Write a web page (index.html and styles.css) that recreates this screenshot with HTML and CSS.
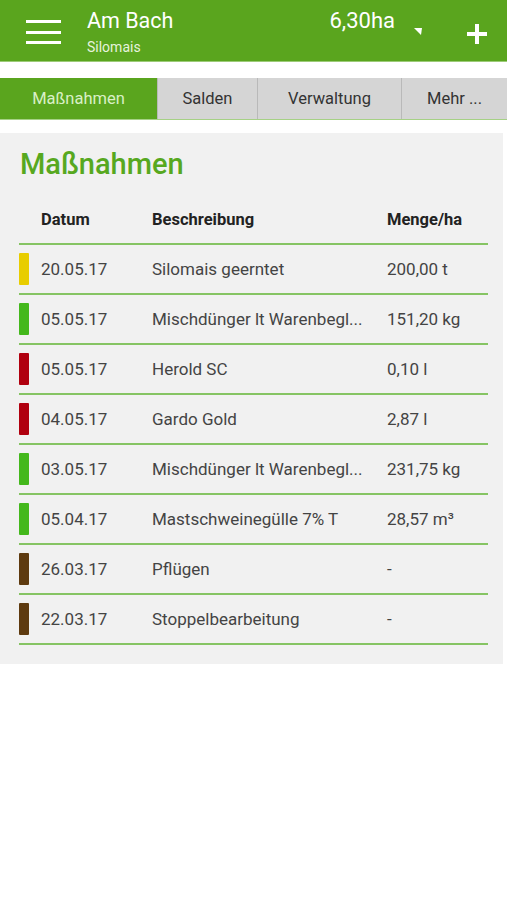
FILE: index.html
```html
<!DOCTYPE html>
<html lang="de">
<head>
<meta charset="utf-8">
<link rel="stylesheet" href="styles.css">
</head>
<body>
<header class="appbar">
  <svg class="menu" width="35" height="24" viewBox="0 0 35 24"><rect x="0" y="0" width="35" height="3" fill="#fff"/><rect x="0" y="11" width="35" height="3" fill="#fff"/><rect x="0" y="21" width="35" height="3" fill="#fff"/></svg>
  <div class="titles">
    <div class="title">Am Bach</div>
    <div class="subtitle">Silomais</div>
  </div>
  <div class="area">6,30ha</div>
  <svg class="caret" width="8" height="7" viewBox="0 0 8 7"><polygon points="0,0 8,0 7,7" fill="#fff"/></svg>
  <svg class="plus" width="20" height="20" viewBox="0 0 20 20"><rect x="8" y="0" width="4" height="20" fill="#fff"/><rect x="0" y="8" width="20" height="4" fill="#fff"/></svg>
</header>

<nav class="tabs">
  <div class="tab active t1">Maßnahmen</div>
  <div class="tab t2">Salden</div>
  <div class="tab t3">Verwaltung</div>
  <div class="tab t4">Mehr ...</div>
</nav>

<section class="card">
  <h1 class="card-title">Maßnahmen</h1>
  <div class="row head">
    <span></span><span>Datum</span><span>Beschreibung</span><span>Menge/ha</span>
  </div>
  <div class="row"><span class="bar yellow"></span><span>20.05.17</span><span>Silomais geerntet</span><span>200,00 t</span></div>
  <div class="row"><span class="bar green"></span><span>05.05.17</span><span>Mischdünger lt Warenbegl...</span><span>151,20 kg</span></div>
  <div class="row"><span class="bar red"></span><span>05.05.17</span><span>Herold SC</span><span>0,10 l</span></div>
  <div class="row"><span class="bar red"></span><span>04.05.17</span><span>Gardo Gold</span><span>2,87 l</span></div>
  <div class="row"><span class="bar green"></span><span>03.05.17</span><span>Mischdünger lt Warenbegl...</span><span>231,75 kg</span></div>
  <div class="row"><span class="bar green"></span><span>05.04.17</span><span>Mastschweinegülle 7% T</span><span>28,57 m³</span></div>
  <div class="row"><span class="bar brown"></span><span>26.03.17</span><span>Pflügen</span><span>-</span></div>
  <div class="row"><span class="bar brown"></span><span>22.03.17</span><span>Stoppelbearbeitung</span><span>-</span></div>
</section>
</body>
</html>
```
FILE: styles.css
```css
* { box-sizing: border-box; }
body {
  margin: 0;
  background: #fff;
  font-family: Roboto, "Liberation Sans", sans-serif;
  color: #444;
}
.appbar {
  display: flex;
  align-items: flex-start;
  height: 62px;
  background: #5aa51e;
  border-bottom: 1px solid #9ccb78;
  padding: 0 20px 0 26px;
  color: #fff;
}
.menu { margin-top: 20px; flex: none; }
.titles { flex: 1; margin-left: 26px; padding-top: 8px; }
.title { font-size: 21.5px; line-height: 25px; }
.subtitle { font-size: 14px; line-height: 18px; margin-top: 5px; color: #e6f3dc; }
.area { font-size: 22px; line-height: 25px; margin-top: 8px; }
.caret { margin: 28px 0 0 19px; }
.plus { margin: 24px 0 0 45px; }

.tabs {
  display: flex;
  margin-top: 16px;
  height: 42px;
  border-bottom: 1px solid #a6d186;
}
.tab {
  display: flex;
  align-items: center;
  justify-content: center;
  background: #d5d5d5;
  border-left: 1px solid #b9b9b9;
  font-size: 16.5px;
  color: #333;
}
.tab.active { background: #5aa51e; color: #d9f0c6; border-left: none; }
.t1 { width: 157px; }
.t2 { width: 100px; }
.t3 { width: 144px; }
.t4 { flex: 1; }

.card {
  margin: 13px 4px 0 0;
  background: #f1f1f1;
  padding: 15px 15px 19px 19px;
}
.card-title {
  margin: 0 0 14px 1px;
  font-size: 29px;
  line-height: 33px;
  font-weight: 500;
  color: #57a81f;
}
.row {
  display: grid;
  grid-template-columns: 22px 111px 235px 1fr;
  align-items: center;
  height: 50px;
  border-bottom: 2px solid #86c463;
  font-size: 17px;
  white-space: nowrap;
}
.row.head {
  font-size: 16.5px;
  font-weight: 700;
  color: #222;
}
.bar { width: 10px; height: 32px; border-radius: 1px; }
.yellow { background: #e8cd00; }
.green { background: #44b81c; }
.red { background: #b0000f; }
.brown { background: #5e3a0f; }
```
